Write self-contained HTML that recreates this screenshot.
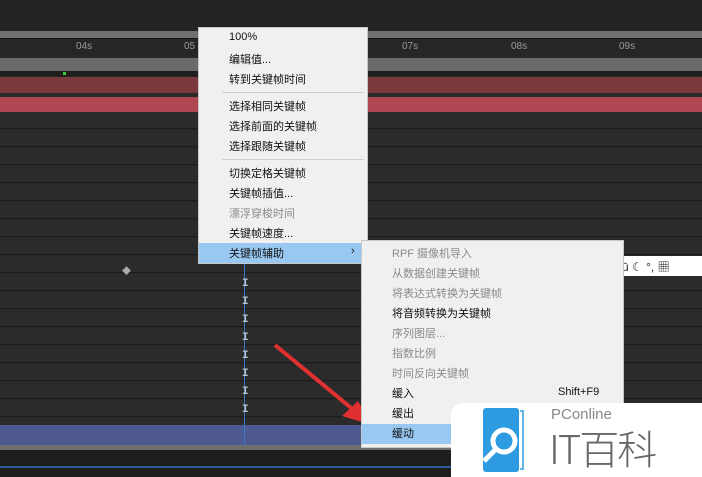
<!DOCTYPE html>
<html><head><meta charset="utf-8"><style>
*{margin:0;padding:0;box-sizing:border-box}
body{width:702px;height:477px;overflow:hidden;background:#262626;position:relative;font-family:"Liberation Sans","Noto Sans CJK SC",sans-serif}
.a{position:absolute}
.row{position:absolute;left:0;width:702px;height:17px;background:#2b2b2b;border-bottom:1px solid #1c1c1c}
.lbl{position:absolute;top:41px;color:#9a9a9a;font-size:10px}
.m{position:absolute;font-size:11px;color:#111;white-space:nowrap}
.g{color:#8a8a8a}
.sep{position:absolute;height:1px;background:#d0d0d0}
.I{position:absolute;left:242px;color:#b8c0c8;font-size:11px;font-weight:bold;font-family:"Liberation Mono",monospace}
</style></head><body>
<div class="a" style="left:0;top:0;width:702px;height:31px;background:#232323"></div>
<div class="a" style="left:0;top:31px;width:702px;height:8px;background:#707070;border-bottom:1px solid #111"></div>
<div class="a" style="left:0;top:40px;width:702px;height:18px;background:#262626"></div>
<div class="lbl" style="left:76px">04s</div><div class="lbl" style="left:184px">05</div>
<div class="lbl" style="left:402px">07s</div><div class="lbl" style="left:511px">08s</div><div class="lbl" style="left:619px">09s</div>
<div class="a" style="left:0;top:58px;width:702px;height:13px;background:#6a6a6a"></div>
<div class="a" style="left:0;top:71px;width:702px;height:5px;background:#1e1e1e"></div>
<div class="a" style="left:63px;top:72px;width:3px;height:3px;background:#3c3"></div>
<div class="a" style="left:0;top:77px;width:702px;height:16px;background:#7a3a3d"></div>
<div class="a" style="left:0;top:93px;width:702px;height:4px;background:#2a2a2a"></div>
<div class="a" style="left:0;top:97px;width:702px;height:15px;background:#b04652"></div>
<div class="row" style="top:112px"></div><div class="row" style="top:130px"></div><div class="row" style="top:148px"></div><div class="row" style="top:166px"></div><div class="row" style="top:184px"></div><div class="row" style="top:202px"></div><div class="row" style="top:220px"></div><div class="row" style="top:238px"></div><div class="row" style="top:256px"></div><div class="row" style="top:274px"></div><div class="row" style="top:292px"></div><div class="row" style="top:310px"></div><div class="row" style="top:328px"></div><div class="row" style="top:346px"></div><div class="row" style="top:364px"></div><div class="row" style="top:382px"></div><div class="row" style="top:400px"></div>
<div class="a" style="left:0;top:418px;width:702px;height:7px;background:#2b2b2b"></div>
<div class="a" style="left:0;top:425px;width:702px;height:20px;background:#4d5990"></div>
<div class="a" style="left:0;top:445px;width:702px;height:5px;background:#6e6e6e"></div>
<div class="a" style="left:0;top:450px;width:702px;height:27px;background:#1e1e1e"></div>
<div class="a" style="left:0;top:466px;width:702px;height:2px;background:#2e5a96"></div>
<div class="a" style="left:244px;top:262px;width:1px;height:183px;background:#3a78c8"></div>
<div class="a" style="left:122px;top:264px;color:#aaa;font-size:9px">◆</div>
<div class="I" style="top:278px">I</div><div class="I" style="top:296px">I</div><div class="I" style="top:314px">I</div><div class="I" style="top:332px">I</div><div class="I" style="top:350px">I</div><div class="I" style="top:368px">I</div><div class="I" style="top:386px">I</div><div class="I" style="top:404px">I</div>
<div class="a" style="left:620px;top:256px;width:82px;height:20px;background:#fff;font-size:12px;color:#222;padding:2px 0 0 2px">ū ☾ °, ▦</div>
<svg class="a" style="left:270px;top:340px" width="110" height="90"><line x1="5" y1="5" x2="86" y2="72" stroke="#e03030" stroke-width="4"/><polygon points="102,85 72,76 88,61" fill="#e03030"/></svg>
<div class="a" style="left:198px;top:27px;width:170px;height:237px;background:#f0f0f0;border:1px solid #c8c8c8"></div>
<div class="m" style="left:229px;top:31px">100%</div>
<div class="m" style="left:229px;top:51px">编辑值...</div>
<div class="m" style="left:229px;top:71px">转到关键帧时间</div>
<div class="sep" style="left:222px;top:92px;width:142px"></div>
<div class="m" style="left:229px;top:98px">选择相同关键帧</div>
<div class="m" style="left:229px;top:118px">选择前面的关键帧</div>
<div class="m" style="left:229px;top:138px">选择跟随关键帧</div>
<div class="sep" style="left:222px;top:159px;width:142px"></div>
<div class="m" style="left:229px;top:165px">切换定格关键帧</div>
<div class="m" style="left:229px;top:185px">关键帧插值...</div>
<div class="m g" style="left:229px;top:205px">漂浮穿梭时间</div>
<div class="m" style="left:229px;top:225px">关键帧速度...</div>
<div class="a" style="left:199px;top:243px;width:168px;height:20px;background:#99c9f3"></div>
<div class="m" style="left:229px;top:245px">关键帧辅助</div>
<div class="m" style="left:351px;top:245px">›</div>
<div class="a" style="left:361px;top:240px;width:263px;height:208px;background:#f0f0f0;border:1px solid #c8c8c8"></div>
<div class="a" style="left:362px;top:424px;width:100px;height:20px;background:#99c9f3"></div>
<div class="m g" style="left:392px;top:245px">RPF 摄像机导入</div>
<div class="m g" style="left:392px;top:265px">从数据创建关键帧</div>
<div class="m g" style="left:392px;top:285px">将表达式转换为关键帧</div>
<div class="m" style="left:392px;top:305px">将音频转换为关键帧</div>
<div class="m g" style="left:392px;top:325px">序列图层...</div>
<div class="m g" style="left:392px;top:345px">指数比例</div>
<div class="m g" style="left:392px;top:365px">时间反向关键帧</div>
<div class="m" style="left:392px;top:385px">缓入</div>
<div class="m" style="left:558px;top:386px">Shift+F9</div>
<div class="m" style="left:392px;top:405px">缓出</div>
<div class="m" style="left:392px;top:425px">缓动</div>
<div class="a" style="left:451px;top:403px;width:251px;height:74px;background:#fff;border-top-left-radius:12px"></div>
<svg class="a" style="left:482px;top:407px" width="42" height="66"><rect x="1" y="1" width="36" height="64" rx="3" fill="#2e9be0"/><path d="M38 4h3v58h-3" fill="none" stroke="#2e9be0" stroke-width="1.5"/><circle cx="22" cy="34" r="11" fill="none" stroke="#fff" stroke-width="5"/><line x1="13" y1="43" x2="2" y2="54" stroke="#fff" stroke-width="5"/></svg>
<div class="a" style="left:551px;top:406px;font-size:15px;color:#888">PConline</div>
<div class="a" style="left:549px;top:424px;font-size:40px;line-height:46px;color:#666;letter-spacing:-2px;font-family:'Noto Sans CJK SC',sans-serif;font-weight:300">IT百科</div>
</body></html>
